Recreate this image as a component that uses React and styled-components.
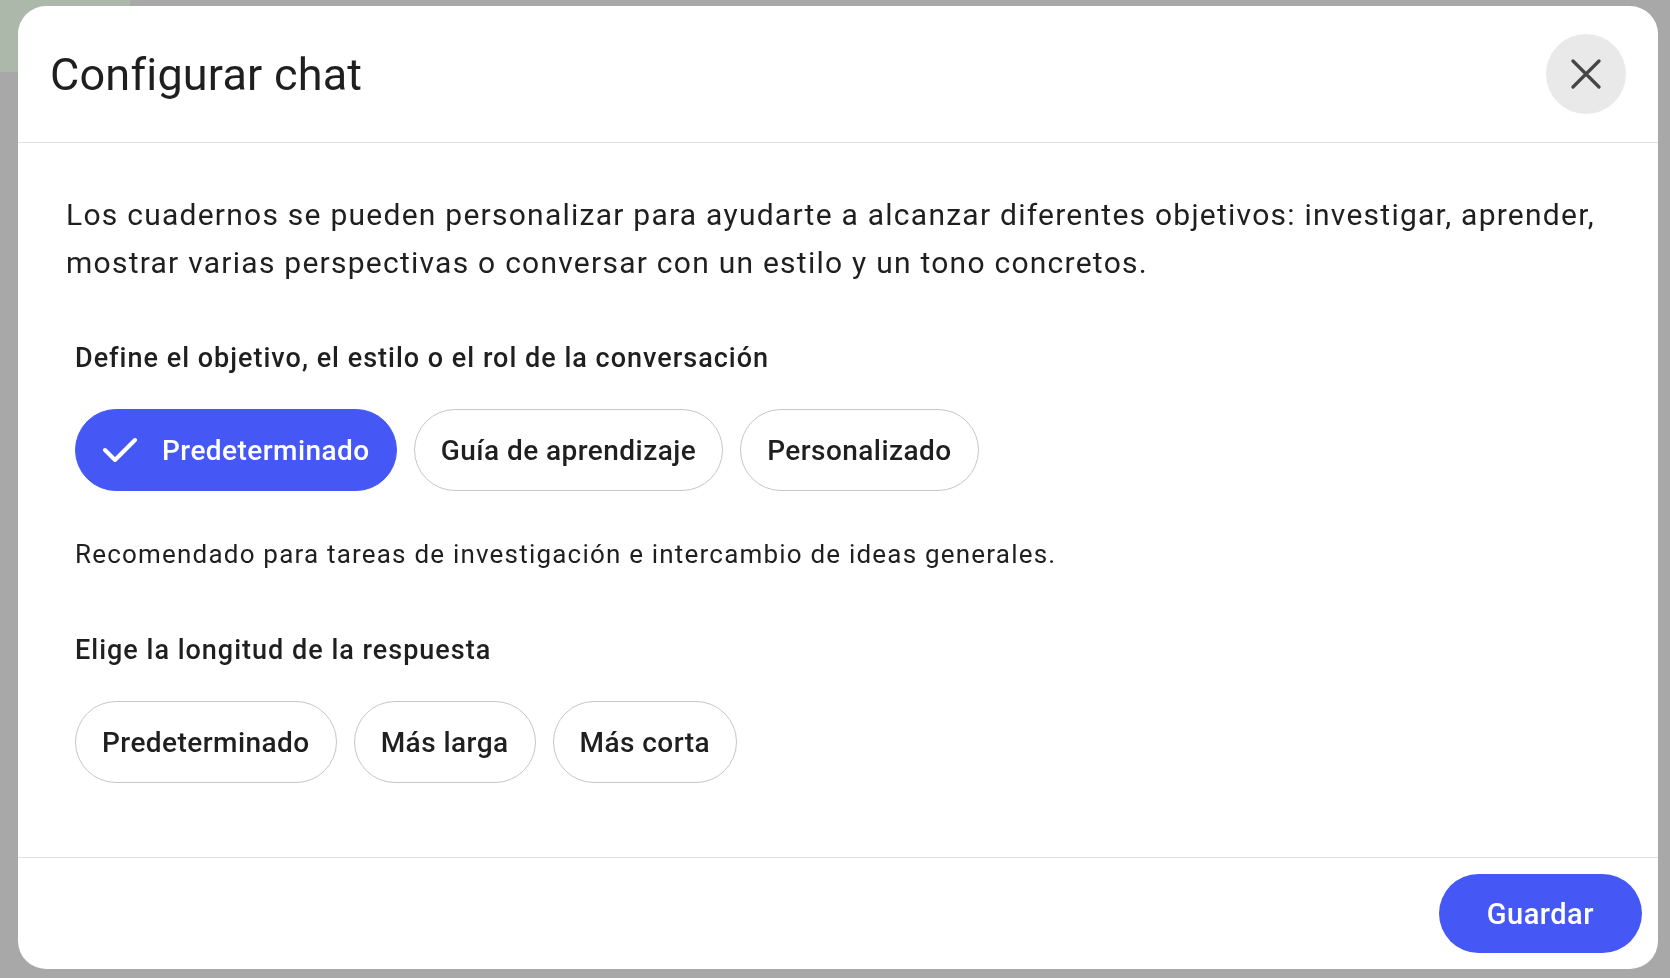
import React, { useState } from 'react';
import styled, { createGlobalStyle } from 'styled-components';

const GlobalStyle = createGlobalStyle`
    html, body { margin: 0; padding: 0; }
    body {
        font-family: Roboto, "Noto Sans", "Liberation Sans", sans-serif;
        color: #1f1f1f;
        background: #a8a8a8;
        overflow: hidden;
    }
    * { box-sizing: border-box; }
`

const Backdrop = styled.div`
    width: 1670px;
    height: 978px;
    background: #a8a8a8;
    display: grid;
    grid-template-columns: 130px 1fr;
    grid-template-rows: 72px 1fr;
    .green { background: #abb8aa; }
`

const Overlay = styled.div`
    position: fixed;
    inset: 0;
    display: flex;
    padding: 6px 12px 9px 18px;
`

const Dialog = styled.div`
    flex: 1;
    display: flex;
    flex-direction: column;
    background: #fff;
    border-radius: 28px;
    overflow: hidden;
`

const Header = styled.header`
    height: 137px;
    flex: 0 0 auto;
    display: flex;
    align-items: center;
    justify-content: space-between;
    padding: 0 32px 0 32px;
    border-bottom: 1px solid #e0e0e6;
    h1 {
        margin: 0;
        font-size: 45px;
        font-weight: 400;
        letter-spacing: 0.2px;
        color: #1f1f1f;
    }
`

const CloseButton = styled.button`
    width: 80px;
    height: 80px;
    border-radius: 50%;
    border: none;
    background: #e9e9e9;
    display: flex;
    align-items: center;
    justify-content: center;
    padding: 0;
    cursor: pointer;
`

const Body = styled.div`
    flex: 1;
    padding: 48px 48px 0 48px;
`

const Intro = styled.p`
    margin: 0 0 53px 0;
    font-size: 30px;
    line-height: 48px;
    letter-spacing: 1.25px;
    color: #1f1f1f;
`

const Section = styled.section`
    padding-left: 9px;
    margin-top: ${p => p.$top || 0}px;
`

const Label = styled.h2`
    margin: 0 0 33px 0;
    font-size: 27px;
    line-height: 36px;
    font-weight: 500;
    letter-spacing: 1px;
    color: #1f1f1f;
`

const ChipRow = styled.div`
    display: flex;
    gap: 17px;
`

const Chip = styled.button`
    height: 82px;
    display: flex;
    align-items: center;
    gap: 25px;
    padding: 0 26px 0 ${p => p.$on ? 27 : 26}px;
    border-radius: 41px;
    border: 1px solid ${p => p.$on ? '#4558f5' : '#c4c7c5'};
    background: ${p => p.$on ? '#4558f5' : '#fff'};
    color: ${p => p.$on ? '#fff' : '#1f1f1f'};
    font-family: inherit;
    font-size: 28px;
    font-weight: 500;
    letter-spacing: 0.45px;
    cursor: pointer;
`

const Hint = styled.p`
    margin: 45px 0 0 0;
    font-size: 26px;
    line-height: 36px;
    letter-spacing: 1.2px;
    color: #1f1f1f;
`

const Footer = styled.footer`
    height: 112px;
    flex: 0 0 auto;
    display: flex;
    align-items: center;
    justify-content: flex-end;
    padding: 0 16px;
    border-top: 1px solid #e0e0e6;
`

const SaveButton = styled.button`
    height: 79px;
    padding: 0 48px;
    border: none;
    border-radius: 40px;
    background: #4558f5;
    color: #fff;
    font-family: inherit;
    font-size: 29px;
    font-weight: 500;
    letter-spacing: 0.5px;
    cursor: pointer;
`

const CheckIcon = () => (
    <svg width="34" height="26" viewBox="0 0 34 26" fill="none">
        <path d="M2 13 L12 23 L32 3" stroke="#fff" strokeWidth="4" strokeLinecap="round" strokeLinejoin="round" />
    </svg>
)

const CloseIcon = () => (
    <svg width="30" height="30" viewBox="0 0 30 30" fill="none">
        <path d="M2 2 L28 28 M28 2 L2 28" stroke="#444746" strokeWidth="3.2" strokeLinecap="round" />
    </svg>
)

const goals = ['Predeterminado', 'Guía de aprendizaje', 'Personalizado']
const lengths = ['Predeterminado', 'Más larga', 'Más corta']

const App = () => {
    const [goal, setGoal] = useState(0)
    const [length, setLength] = useState(-1)

    return (
        <>
            <GlobalStyle />
            <Backdrop>
                <div className="green" />
            </Backdrop>
            <Overlay>
                <Dialog>
                    <Header>
                        <h1>Configurar chat</h1>
                        <CloseButton aria-label="Cerrar"><CloseIcon /></CloseButton>
                    </Header>
                    <Body>
                        <Intro>
                            Los cuadernos se pueden personalizar para ayudarte a alcanzar diferentes objetivos: investigar, aprender,
                            mostrar varias perspectivas o conversar con un estilo y un tono concretos.
                        </Intro>
                        <Section>
                            <Label>Define el objetivo, el estilo o el rol de la conversación</Label>
                            <ChipRow>
                                {goals.map((item, index) => (
                                    <Chip key={index} $on={goal === index} onClick={() => setGoal(index)}>
                                        {goal === index && <CheckIcon />}
                                        {item}
                                    </Chip>
                                ))}
                            </ChipRow>
                            <Hint>Recomendado para tareas de investigación e intercambio de ideas generales.</Hint>
                        </Section>
                        <Section $top={60}>
                            <Label>Elige la longitud de la respuesta</Label>
                            <ChipRow>
                                {lengths.map((item, index) => (
                                    <Chip key={index} $on={length === index} onClick={() => setLength(index)}>
                                        {length === index && <CheckIcon />}
                                        {item}
                                    </Chip>
                                ))}
                            </ChipRow>
                        </Section>
                    </Body>
                    <Footer>
                        <SaveButton>Guardar</SaveButton>
                    </Footer>
                </Dialog>
            </Overlay>
        </>
    );
};

export default App;
